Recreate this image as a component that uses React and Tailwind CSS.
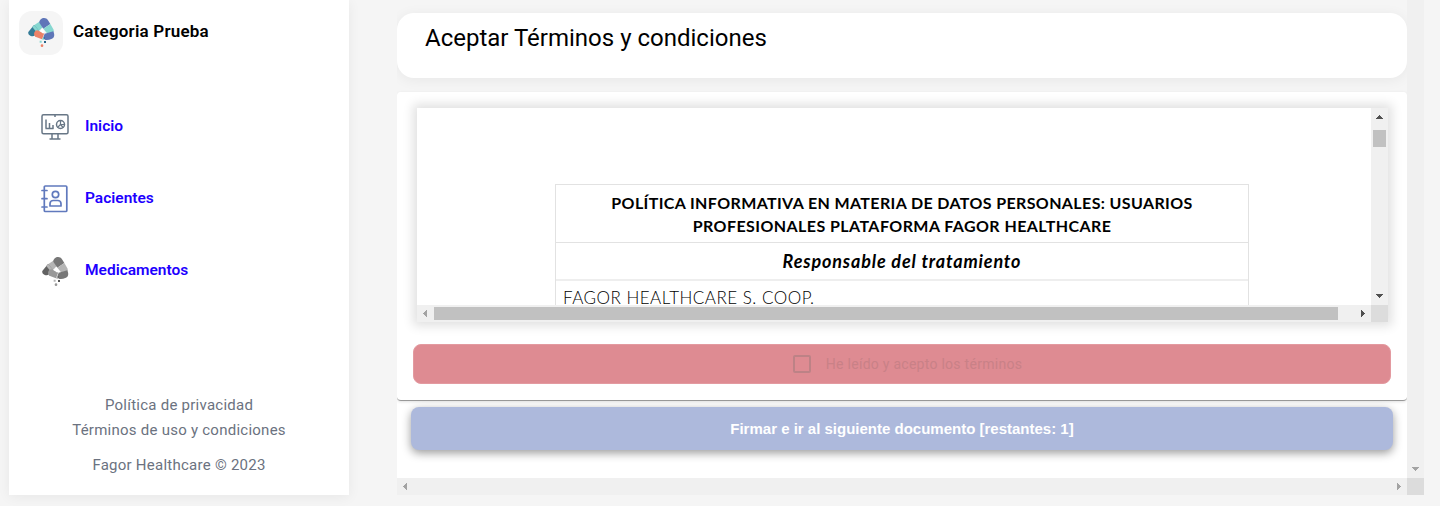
const roboto = "font-['Roboto',sans-serif]";

function Arrow({ dir, color }) {
  const d = {
    up: 'M4 0h1v1H4zM3 1h3v1H3zM2 2h5v1H2zM1 3h7v1H1z',
    down: 'M1 0h7v1H1zM2 1h5v1H2zM3 2h3v1H3zM4 3h1v1H4z',
    left: 'M0 4h1v1H0zM1 3h1v3H1zM2 2h1v5H2zM3 1h1v7H3z',
    right: 'M0 1h1v7H0zM1 2h1v5H1zM2 3h1v3H2zM3 4h1v1H3z',
  }[dir];
  const flat = dir === 'up' || dir === 'down';
  return (
    <svg width={flat ? 9 : 4} height={flat ? 4 : 9} shapeRendering="crispEdges" className="block shrink-0">
      <path d={d} fill={color} />
    </svg>
  );
}

function Capsules({ colors, className }) {
  const [blue, aqua, teal, coral, dot] = colors;
  return (
    <svg width="28" height="31" viewBox="27 27 84 93" className={className}>
      <path d="M48 52 66 40 74 58 62 70Z" fill={aqua} />
      <path d="M48 51 63 68 51 82C44 89 28 82 31 72Z" fill={teal} />
      <path d="M48 51 63 68 57 74 43 57Z" fill={aqua} />
      <path d="M64 44C64 29 84 25 90 37L97 48 76 62Z" fill={blue} />
      <path d="M97 48 106 64Q109 70 106 73L87 76 76 62Z" fill={aqua} />
      <path d="M58 67 79 76 72 94 54 87C44 82 48 67 58 67Z" fill={coral} />
      <path d="M80 77 106 70C111 82 109 91 100 93Q90 97 80 95L76 88Z" fill={blue} />
      <path d="M72 61 80 70 76 77 66 70Z" fill="#ffffff" />
      <path d="M65 98h6v6h-6zM73 90h5v5h-5z" fill={aqua} />
      <path d="M78 99h6v6h-6zM77 88h3v4h-3z" fill={dot} />
      <circle cx="72" cy="113" r="4" fill={coral} />
    </svg>
  );
}

function MonitorIcon() {
  return (
    <svg width="28" height="28" viewBox="0 0 28 28" fill="none" stroke="#687786" strokeWidth="1.500" className="block">
      <rect x="1" y="1.700" width="26" height="19" rx="1.500" />
      <path d="M11 21v5M17 21v5M8.500 26h11M14 2v2M5 6.500v9M4.500 15.500h8M8.500 10v5M12 12v4" />
      <circle cx="19.500" cy="11.500" r="4" />
      <path d="M19.500 7.500v4h4M19.500 11.500l-3 3M19.500 11.500l2.700 3" strokeWidth="1.200" />
    </svg>
  );
}

function ContactsIcon() {
  return (
    <svg width="28" height="28" viewBox="0 0 28 28" fill="none" stroke="#6079bd" strokeWidth="1.700" className="block">
      <rect x="3.300" y="1" width="22.500" height="25.500" rx="1" />
      <path d="M1 5.500h5M1 13.700h5M1 22h5" strokeLinecap="round" />
      <circle cx="14.500" cy="9.500" r="3.200" />
      <path d="M9 21v-2.300a3.200 3.200 0 0 1 3.200-3.200h4.600a3.200 3.200 0 0 1 3.200 3.200V21Z" strokeLinejoin="round" />
    </svg>
  );
}

function NavItem({ icon, label }) {
  return (
    <a className="flex h-[72px] items-center pl-8 font-semibold text-[#1e00ff]">
      <span className="w-7">{icon}</span>
      <span className="ml-4 text-[15.500px]">{label}</span>
    </a>
  );
}

function Sidebar() {
  return (
    <aside className="flex h-[495px] w-[340px] shrink-0 flex-col bg-white shadow-[0_2px_12px_rgba(0,0,0,0.06)]">
      <header className="flex items-start pl-[10px] pt-[11px]">
        <span className="flex size-11 justify-center rounded-[13px] bg-[#f5f5f5] pt-[6px]">
          <Capsules colors={['#5f76b8', '#86d7d0', '#347b97', '#ec8268', '#27658a']} />
        </span>
        <h1 className="ml-[10px] mt-[7px] text-[17px] font-semibold leading-[26px] tracking-[0.200px] text-black">Categoria Prueba</h1>
      </header>
      <nav className="mt-9">
        <NavItem icon={<MonitorIcon />} label="Inicio" />
        <NavItem icon={<ContactsIcon />} label="Pacientes" />
        <NavItem
          icon={<Capsules colors={['#777777', '#b5b5b5', '#626262', '#999999', '#555555']} />}
          label="Medicamentos"
        />
      </nav>
      <footer className="mt-auto flex flex-col items-center pb-[17px] text-[15px] leading-[25px] tracking-[0.250px] text-[#6b7280]">
        <a>Política de privacidad</a>
        <a>Términos de uso y condiciones</a>
        <span className="mt-[10px]">Fagor Healthcare © 2023</span>
      </footer>
    </aside>
  );
}

function DocumentViewer() {
  return (
    <div className="ml-5 flex h-[214px] w-[971px] flex-col bg-white shadow-[0_0_10px_4px_rgba(0,0,0,0.12)]">
      <div className="flex h-[197px]">
        <div className="w-[954px] pl-[138px] pt-[76px] font-['Lato',sans-serif] text-black">
          <div className="h-[121px] w-[694px] border border-b-0 border-[#e2e2e2]">
            <div className="flex h-[58px] flex-col items-center border-b border-[#e2e2e2] pt-[6px] text-[16px] font-bold leading-[23px]">
              <span className="whitespace-nowrap tracking-[0.380px]">POLÍTICA INFORMATIVA EN MATERIA DE DATOS PERSONALES: USUARIOS</span>
              <span className="whitespace-nowrap tracking-[0.430px]">PROFESIONALES PLATAFORMA FAGOR HEALTHCARE</span>
            </div>
            <div className="h-[38px] border-b-2 border-[#eeeeee] pt-[6px] text-center text-[18px] font-bold italic leading-[24px] tracking-[0.850px]">
              Responsable del tratamiento
            </div>
            <div className="h-[24px] pl-[7px] pt-[5px] text-[17px] font-light leading-[24px] tracking-[0.500px]">FAGOR HEALTHCARE S. COOP.</div>
          </div>
        </div>
        <div className="flex w-[17px] flex-col items-center bg-[#f0f0f0] pb-[7px] pt-[7px]">
          <Arrow dir="up" color="#505050" />
          <div className="mt-[11px] h-[17px] w-[13px] bg-[#c1c1c1]" />
          <div className="mt-auto"><Arrow dir="down" color="#505050" /></div>
        </div>
      </div>
      <div className="flex h-[17px] bg-[#f0f0f0]">
        <div className="flex flex-1 items-center pl-[6px] pr-[6px]">
          <Arrow dir="left" color="#a3a3a3" />
          <div className="ml-[7px] h-[13px] w-[904px] bg-[#c1c1c1]" />
          <div className="ml-auto"><Arrow dir="right" color="#505050" /></div>
        </div>
        <div className="w-[17px] bg-[#dcdcdc]" />
      </div>
    </div>
  );
}

export default function App() {
  return (
    <div className={`${roboto} flex h-[506px] w-[1440px] overflow-hidden bg-[#f5f5f5] pl-[9px]`}>
      <Sidebar />
      <main className="ml-12 flex h-[495px] w-[1027px] flex-col">
        <div className="flex h-[478px]">
          <div className="flex w-[1010px] flex-col overflow-hidden pt-[13px]">
            <header className="h-[65px] shrink-0 rounded-[17px] bg-white pl-7 pt-[9px] shadow-[0_2px_14px_rgba(0,0,0,0.06)]">
              <h2 className="text-2xl font-normal leading-8 text-black">Aceptar Términos y condiciones</h2>
            </header>
            <section className="mt-[14px] flex flex-1 flex-col rounded-t bg-white">
              <div className="h-[309px] shrink-0 rounded border-b border-[#999999] bg-white pt-4 shadow-[0_1px_3px_rgba(0,0,0,0.12)]">
                <DocumentViewer />
                <label className="mx-4 mt-[22px] flex h-10 items-center justify-center rounded-lg border border-[#e39aa0] bg-[#de8b92] pl-[11px] text-[14px] tracking-[0.270px] text-[#c98187]">
                  <span className="mr-[15px] size-[18px] rounded-[2px] border-2 border-[#bd8286]" />
                  <span>He leído y acepto los términos</span>
                </label>
              </div>
              <button className="ml-[14px] mt-[6px] h-[43px] w-[982px] shrink-0 rounded-lg bg-[#adb9dc] pt-[2px] font-['Liberation_Sans',Arial,sans-serif] text-[15px] font-bold text-white shadow-[0_3px_10px_rgba(0,0,0,0.4)]">
                Firmar e ir al siguiente documento [restantes: 1]
              </button>
            </section>
          </div>
          <div className="flex w-[17px] flex-col items-center justify-end bg-[#f0f0f0] pb-[7px]">
            <Arrow dir="down" color="#a3a3a3" />
          </div>
        </div>
        <div className="flex h-[17px] bg-[#f0f0f0]">
          <div className="flex flex-1 items-center justify-between px-[6px]">
            <Arrow dir="left" color="#a3a3a3" />
            <Arrow dir="right" color="#a3a3a3" />
          </div>
          <div className="w-[17px] bg-[#dcdcdc]" />
        </div>
      </main>
    </div>
  );
}
